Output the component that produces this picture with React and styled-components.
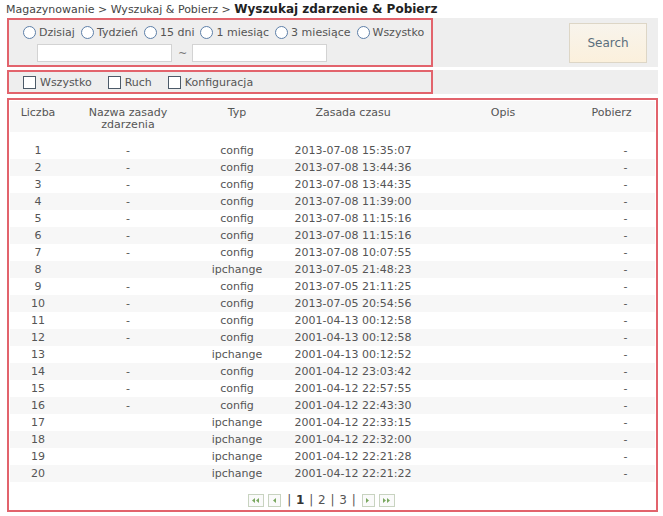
import React from 'react';
import styled, { createGlobalStyle } from 'styled-components';

const GlobalStyle = createGlobalStyle`
  body {
    margin: 0;
    background: #fff;
    font-family: "DejaVu Sans", Verdana, sans-serif;
    font-size: 11px;
    color: #555;
  }
`;

const Page = styled.div`
  width: 663px;
  padding: 2px 5px 0 7px;
  box-sizing: border-box;
`;

const Crumbs = styled.div`
  height: 15px;
  line-height: 14px;
  color: #444;
  font-size: 11px;
  margin-left: -1px;
  b {
    color: #222;
    font-size: 12px;
  }
`;

const Band = styled.div`
  display: flex;
  align-items: center;
  background: #eeeeee;
  margin-top: ${(p) => p.$gap}px;
  width: 651px;
`;

const RedBox = styled.div`
  box-sizing: border-box;
  width: 426px;
  height: ${(p) => p.$h}px;
  border: 2px solid #e2636c;
  padding: ${(p) => p.$pad};
`;

const RadioLine = styled.div`
  display: flex;
  align-items: center;
  height: 20px;
  white-space: nowrap;
`;

const Radio = styled.label`
  display: flex;
  align-items: center;
  margin-right: 6px;
  &::before {
    content: '';
    width: 11px;
    height: 11px;
    border: 1px solid #5d7fa8;
    border-radius: 50%;
    background: #fff;
    margin-right: 3px;
  }
`;

const DateLine = styled.div`
  display: flex;
  align-items: center;
  padding-left: 14px;
  margin-top: 2px;
  gap: 6px;
`;

const Field = styled.input`
  box-sizing: border-box;
  width: 135px;
  height: 18px;
  border: 1px solid #d3d3d3;
  background: #fff;
  margin: 0;
`;

const Tilde = styled.span`
  color: #777;
  width: 8px;
  text-align: center;
`;

const Check = styled.label`
  display: flex;
  align-items: center;
  margin-right: 16px;
  &::before {
    content: '';
    width: 11px;
    height: 11px;
    border: 1px solid #4c5a68;
    background: #fff;
    margin-right: 4px;
  }
`;

const CheckLine = styled.div`
  display: flex;
  align-items: center;
  height: 19px;
`;

const SearchButton = styled.button`
  margin-left: auto;
  margin-right: 11px;
  width: 78px;
  height: 40px;
  border: 1px solid #ddd6c6;
  background: linear-gradient(#f8f4ec, #fbf0dc);
  color: #5b6e7c;
  font-family: "DejaVu Sans", Verdana, sans-serif;
  font-size: 12px;
`;

const Panel = styled.div`
  box-sizing: border-box;
  margin-top: 4px;
  width: 651px;
  height: 414px;
  border: 2px solid #e2636c;
  padding: 1px 1px 0;
`;

const Table = styled.table`
  width: 100%;
  border-collapse: collapse;
  table-layout: fixed;
  th {
    font-weight: normal;
    background: #f7f7f7;
    height: 25px;
    vertical-align: top;
    padding: 6px 0 0;
    line-height: 12px;
    color: #555;
  }
  td {
    height: 17px;
    padding: 0;
    line-height: 17px;
    text-align: center;
    white-space: nowrap;
  }
  tbody tr:nth-child(odd) td {
    background: #f7f7f7;
  }
  tbody tr:first-child td {
    background: #fff;
  }
`;

const EndHead = styled.th`
  && {
    padding-right: 16px;
  }
`;

const Spacer = styled.tr`
  td {
    height: 10px;
    line-height: 10px;
  }
`;

const DashCell = styled.td`
  && {
    padding-left: ${(p) => p.$shift}px;
  }
`;

const Pager = styled.div`
  display: flex;
  align-items: center;
  justify-content: center;
  margin-top: 11px;
  margin-left: -22px;
  font-size: 12px;
  color: #555;
  gap: 4px;
`;

const PageBtn = styled.span`
  display: flex;
  align-items: center;
  justify-content: center;
  box-sizing: border-box;
  width: ${(p) => p.$w}px;
  height: 13px;
  border: 1px solid #c8d3c0;
  background: #fafafa;
`;

const Pages = styled.span`
  margin: 0 2px;
  word-spacing: 1px;
  b {
    color: #333;
  }
`;

const Arrow = ({ dir, double }) => {
  const tri = (x) =>
    dir === 'left'
      ? `M${x + 3} 1 L${x} 3.5 L${x + 3} 6 Z`
      : `M${x} 1 L${x + 3} 3.5 L${x} 6 Z`;
  return (
    <svg width={double ? 8 : 4} height="7" viewBox={`0 0 ${double ? 8 : 4} 7`}>
      <path d={tri(0)} fill="#7aa860" />
      {double && <path d={tri(4)} fill="#7aa860" />}
    </svg>
  );
};

const rows = [
  [1, '-', 'config', '2013-07-08 15:35:07'],
  [2, '-', 'config', '2013-07-08 13:44:36'],
  [3, '-', 'config', '2013-07-08 13:44:35'],
  [4, '-', 'config', '2013-07-08 11:39:00'],
  [5, '-', 'config', '2013-07-08 11:15:16'],
  [6, '-', 'config', '2013-07-08 11:15:16'],
  [7, '-', 'config', '2013-07-08 10:07:55'],
  [8, '', 'ipchange', '2013-07-05 21:48:23'],
  [9, '-', 'config', '2013-07-05 21:11:25'],
  [10, '-', 'config', '2013-07-05 20:54:56'],
  [11, '-', 'config', '2001-04-13 00:12:58'],
  [12, '-', 'config', '2001-04-13 00:12:58'],
  [13, '', 'ipchange', '2001-04-13 00:12:52'],
  [14, '-', 'config', '2001-04-12 23:03:42'],
  [15, '-', 'config', '2001-04-12 22:57:55'],
  [16, '-', 'config', '2001-04-12 22:43:30'],
  [17, '', 'ipchange', '2001-04-12 22:33:15'],
  [18, '', 'ipchange', '2001-04-12 22:32:00'],
  [19, '', 'ipchange', '2001-04-12 22:21:28'],
  [20, '', 'ipchange', '2001-04-12 22:21:22'],
];

export default function App() {
  return (
    <Page>
      <GlobalStyle />
      <Crumbs>
        Magazynowanie &gt; Wyszukaj &amp; Pobierz &gt; <b>Wyszukaj zdarzenie &amp; Pobierz</b>
      </Crumbs>
      <Band $gap={1}>
        <RedBox $h={49} $pad="2px 0 0 14px">
          <RadioLine>
            <Radio>Dzisiaj</Radio>
            <Radio>Tydzień</Radio>
            <Radio>15 dni</Radio>
            <Radio>1 miesiąc</Radio>
            <Radio>3 miesiące</Radio>
            <Radio>Wszystko</Radio>
          </RadioLine>
          <DateLine>
            <Field />
            <Tilde>~</Tilde>
            <Field />
          </DateLine>
        </RedBox>
        <SearchButton>Search</SearchButton>
      </Band>
      <Band $gap={3}>
        <RedBox $h={24} $pad="1px 0 0 14px">
          <CheckLine>
            <Check>Wszystko</Check>
            <Check>Ruch</Check>
            <Check>Konfiguracja</Check>
          </CheckLine>
        </RedBox>
      </Band>
      <Panel>
        <Table>
          <colgroup>
            <col style={{ width: 56 }} />
            <col style={{ width: 124 }} />
            <col style={{ width: 94 }} />
            <col style={{ width: 138 }} />
            <col style={{ width: 162 }} />
            <col />
          </colgroup>
          <thead>
            <tr>
              <th>Liczba</th>
              <th>
                Nazwa zasady
                <br />
                zdarzenia
              </th>
              <th>Typ</th>
              <th>Zasada czasu</th>
              <th>Opis</th>
              <EndHead>Pobierz</EndHead>
            </tr>
          </thead>
          <tbody>
            <Spacer>
              <td colSpan={6} />
            </Spacer>
            {rows.map((r) => (
              <tr key={r[0]}>
                <td>{r[0]}</td>
                <td>{r[1]}</td>
                <td>{r[2]}</td>
                <td>{r[3]}</td>
                <td />
                <DashCell $shift={12}>-</DashCell>
              </tr>
            ))}
          </tbody>
        </Table>
        <Pager>
          <PageBtn $w={16}>
            <Arrow dir="left" double />
          </PageBtn>
          <PageBtn $w={13}>
            <Arrow dir="left" />
          </PageBtn>
          <Pages>
            | <b>1</b> | 2 | 3 |
          </Pages>
          <PageBtn $w={13}>
            <Arrow dir="right" />
          </PageBtn>
          <PageBtn $w={16}>
            <Arrow dir="right" double />
          </PageBtn>
        </Pager>
      </Panel>
    </Page>
  );
}
